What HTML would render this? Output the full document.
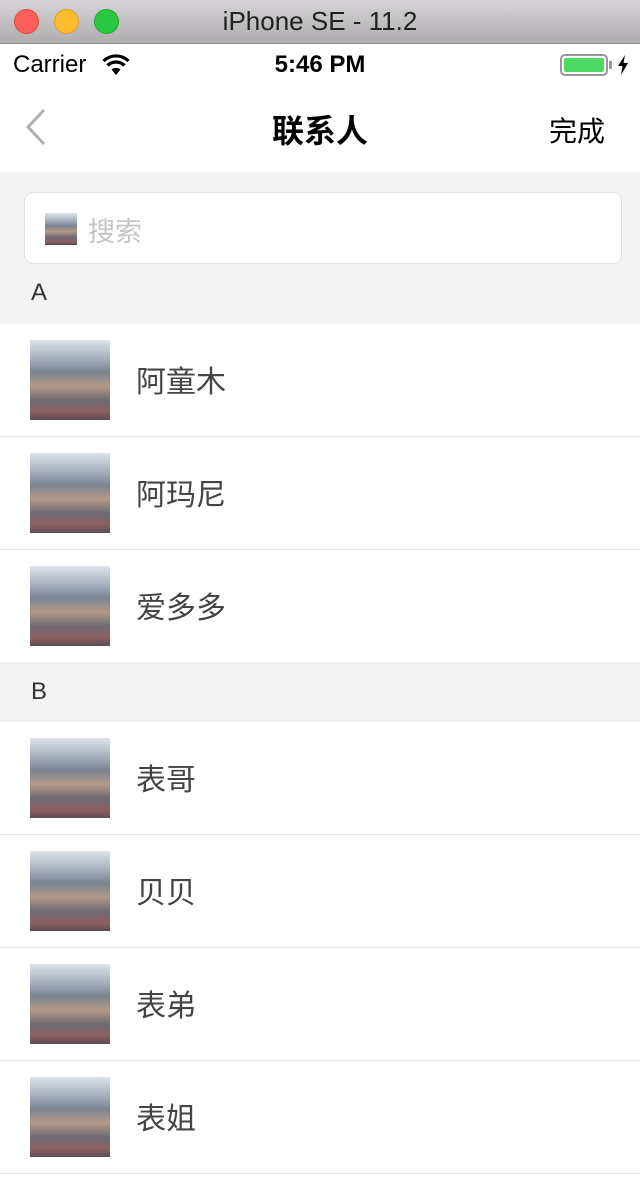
<!DOCTYPE html>
<html><head><meta charset="utf-8"><style>
*{margin:0;padding:0;box-sizing:border-box}
body{width:640px;height:1180px;background:#fff;font-family:"Liberation Sans","Noto Sans CJK SC",sans-serif;position:relative;overflow:hidden}
.tb{position:absolute;left:0;top:0;width:640px;height:44px;background:linear-gradient(#d6d4d6,#aeacae);border-bottom:1px solid #8e8c8e}
.dot{position:absolute;top:9px;width:25px;height:25px;border-radius:50%}
.tt{position:absolute;left:0;width:640px;top:6px;text-align:center;font-size:26px;color:#222}
.sb{position:absolute;top:44px;height:42px;width:640px;font-size:24px;color:#000}
.nav{position:absolute;top:86px;height:86px;width:640px}
.grey{position:absolute;top:172px;height:152px;width:640px;background:#f3f3f3}
.search{position:absolute;left:24px;top:192px;width:598px;height:72px;background:#fff;border:1px solid #e0e0e0;border-radius:9px}
.av{position:absolute;left:30px;width:80px;height:80px;background:linear-gradient(180deg,#dfe3ea 0%,#a9b2c0 22%,#7b8494 40%,#b49886 58%,#6f6a73 75%,#8c5f63 90%,#5a4b52 100%)}
.row{position:absolute;left:0;width:640px;height:113px;border-bottom:1px solid #e6e6e6}
.row .av{top:16px}
.row span{position:absolute;left:136px;top:33px;font-size:30px;color:#444}
.hd{position:absolute;left:0;width:640px;background:#f3f3f3;font-size:24px;color:#333;padding-left:31px}
</style></head><body>
<div class="tb">
<div class="dot" style="left:14px;background:#fc5f57;border:1px solid #de4a43"></div>
<div class="dot" style="left:54px;background:#fdbc2e;border:1px solid #dea123"></div>
<div class="dot" style="left:94px;background:#29c840;border:1px solid #1faa30"></div>
<div class="tt">iPhone SE - 11.2</div>
</div>
<div class="sb">
<span style="position:absolute;left:13px;top:7px">Carrier</span>
<svg style="position:absolute;left:101px;top:10px" width="30" height="22" viewBox="0 0 30 22"><path d="M15 21 L10.5 15.5 A7 7 0 0 1 19.5 15.5Z" fill="#000"/><path d="M6.5 11.5 A12 12 0 0 1 23.5 11.5" stroke="#000" stroke-width="3.2" fill="none"/><path d="M2.5 7 A18 18 0 0 1 27.5 7" stroke="#000" stroke-width="3.2" fill="none"/></svg>
<span style="position:absolute;left:0;width:640px;text-align:center;top:7px;font-weight:bold">5:46 PM</span>
<div style="position:absolute;left:560px;top:10px;width:48px;height:22px;border:2px solid #999;border-radius:5px;padding:2px"><div style="width:100%;height:100%;background:#4cd964;border-radius:2px"></div></div>
<div style="position:absolute;left:609px;top:17px;width:3px;height:8px;background:#999"></div>
<svg style="position:absolute;left:617px;top:11px" width="12" height="20" viewBox="0 0 12 20"><path d="M8 0 L1 11 H5.5 L4 20 L11 8 H6.5Z" fill="#000"/></svg>
</div>
<div class="nav">
<svg style="position:absolute;left:24px;top:22px" width="24" height="38" viewBox="0 0 24 38"><path d="M20 2 L4 19 L20 36" stroke="#b0b0b0" stroke-width="3" fill="none"/></svg>
<div style="position:absolute;left:0;width:640px;text-align:center;top:20px;font-size:32px;font-weight:bold;color:#000">联系人</div>
<div style="position:absolute;left:549px;top:24px;font-size:28px;color:#000">完成</div>
</div>
<div class="grey"></div>
<div class="search"><div class="av" style="left:20px;top:20px;width:32px;height:32px"></div><span style="position:absolute;left:63px;top:17px;font-size:27px;color:#c4c4c8">搜索</span></div>
<div class="hd" style="top:272px;height:52px;line-height:42px;background:none">A</div>
<div class="row" style="top:324px"><div class="av"></div><span>阿童木</span></div>
<div class="row" style="top:437px"><div class="av"></div><span>阿玛尼</span></div>
<div class="row" style="top:550px;border:none;height:112px"><div class="av"></div><span>爱多多</span></div>
<div class="hd" style="top:662px;height:60px;line-height:60px">B</div>
<div class="row" style="top:722px"><div class="av"></div><span>表哥</span></div>
<div class="row" style="top:835px"><div class="av"></div><span>贝贝</span></div>
<div class="row" style="top:948px"><div class="av"></div><span>表弟</span></div>
<div class="row" style="top:1061px"><div class="av"></div><span>表姐</span></div>
</body></html>
